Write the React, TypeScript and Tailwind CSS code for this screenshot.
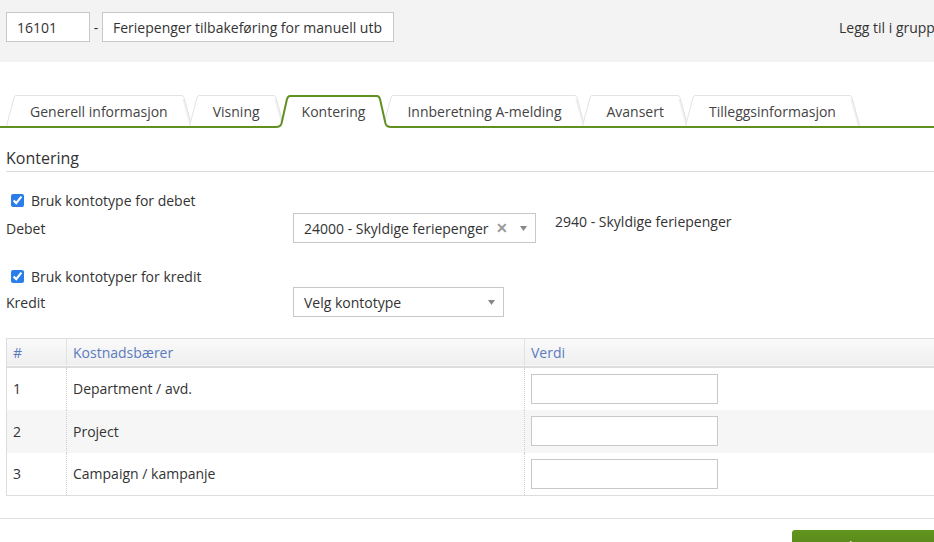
import { FC } from 'react';

const tabs = [
  'Generell informasjon',
  'Visning',
  'Kontering',
  'Innberetning A-melding',
  'Avansert',
  'Tilleggsinformasjon',
];

const rows = [
  { n: '1', name: 'Department / avd.' },
  { n: '2', name: 'Project' },
  { n: '3', name: 'Campaign / kampanje' },
];

const GREEN = '#5f9021';

const InactiveTab: FC<{ label: string; offset: string }> = ({ label, offset }) => (
  <div className={`flex h-[31px] items-stretch ${offset}`}>
    <svg width="10" height="31" viewBox="0 0 10 31" className="block">
      <path d="M0,31 L8,2.5 Q8.8,0.5 10.5,0.5 L10.5,31 Z" fill="#fff" />
      <path d="M0.5,31 L8,2.5 Q8.8,0.5 10,0.5" fill="none" stroke="#e3e3e3" strokeWidth="1" />
    </svg>
    <div className="flex items-center border-t border-[#e3e3e3] bg-white px-[14px] text-[14px] text-[#444] whitespace-nowrap">
      {label}
    </div>
    <svg width="10" height="31" viewBox="0 0 10 31" className="block">
      <path d="M-0.5,0.5 Q1.2,0.5 2,2.5 L10,31 L-0.5,31 Z" fill="#fff" />
      <path d="M1.5,4 L9,31" fill="none" stroke="#d6d6d6" strokeWidth="2.5" opacity="0.35" />
      <path d="M0,0.5 Q1.2,0.5 2,2.5 L9.5,31" fill="none" stroke="#e3e3e3" strokeWidth="1" />
    </svg>
  </div>
);

const ActiveTab: FC<{ label: string }> = ({ label }) => (
  <div className="relative z-10 -mb-[2px] -ml-[8px] flex h-[33px] items-stretch">
    <svg width="14" height="33" viewBox="0 0 14 33" className="block">
      <path d="M0,33 L0,31 Q4,31 5,28 L11,4 Q12,1 14.5,1 L14.5,33 Z" fill="#fff" />
      <path d="M0,32 Q4.5,32 5.5,28.5 L11,4 Q12,1 14.5,1" fill="none" stroke={GREEN} strokeWidth="2" />
    </svg>
    <div className="flex items-center border-t-2 border-[#5f9021] bg-white px-[12px] pb-[2px] text-[14px] text-[#444] whitespace-nowrap">
      {label}
    </div>
    <svg width="14" height="33" viewBox="0 0 14 33" className="block">
      <path d="M14,33 L14,31 Q10,31 9,28 L3,4 Q2,1 -0.5,1 L-0.5,33 Z" fill="#fff" />
      <path d="M14,32 Q9.5,32 8.5,28.5 L3,4 Q2,1 -0.5,1" fill="none" stroke={GREEN} strokeWidth="2" />
    </svg>
  </div>
);

const Caret: FC = () => (
  <svg width="7" height="5" viewBox="0 0 7 5" className="block">
    <path d="M0,0 L7,0 L3.5,5 Z" fill="#888" />
  </svg>
);

export default function App() {
  const activeIndex = tabs.indexOf('Kontering');

  return (
    <div
      className="h-[542px] w-[934px] overflow-hidden bg-white text-[14px] text-[#333]"
      style={{ fontFamily: '"Open Sans", "Noto Sans", sans-serif' }}
    >
      {/* Top bar */}
      <div className="flex h-[62px] items-start bg-[#f3f3f3] pt-[12px] pl-[6px]">
        <div className="flex h-[30px] w-[84px] items-center border border-[#c8c8c8] bg-white px-[10px]">
          16101
        </div>
        <span className="flex h-[30px] w-[12px] items-center justify-center">-</span>
        <div className="flex h-[30px] w-[292px] items-center border border-[#c8c8c8] bg-white px-[10px] whitespace-nowrap">
          Feriepenger tilbakeføring for manuell utb
        </div>
        <div className="ml-auto flex h-[30px] w-[95px] items-center overflow-hidden whitespace-nowrap">
          Legg til i gruppe
        </div>
      </div>

      {/* Tabs */}
      <div className="mt-[33px] flex h-[33px] items-end border-b-2 border-[#5f9021] pl-[6px]">
        {tabs.map((t, i) =>
          i === activeIndex ? (
            <ActiveTab key={t} label={t} />
          ) : (
            <InactiveTab
              key={t}
              label={t}
              offset={i === 0 ? '' : i === activeIndex + 1 ? '-ml-[8px]' : '-ml-[3px]'}
            />
          )
        )}
      </div>
      <div className="h-[2px]" />

      <div className="w-[1000px] pl-[6px]">
        {/* Section title */}
        <div className="mt-[17px] flex h-[25px] items-start border-b border-[#dcdcdc] text-[16px] leading-[22px] text-[#333]">
          Kontering
        </div>

        {/* Debet */}
        <label className="mt-[18px] flex h-[20px] items-center gap-[7px] pl-[5px]">
          <input type="checkbox" defaultChecked className="h-[13px] w-[13px] accent-[#2b7de9]" />
          Bruk kontotype for debet
        </label>
        <div className="mt-[3px] flex items-start">
          <div className="flex h-[30px] w-[287px] items-center">Debet</div>
          <div className="flex h-[30px] w-[243px] items-center border border-[#c8c8c8] bg-white pr-[8px] pl-[10px]">
            <span className="flex-1 whitespace-nowrap">24000 - Skyldige feriepenger</span>
            <span className="mr-[12px] text-[14px] font-bold leading-none text-[#999]">✕</span>
            <Caret />
          </div>
          <div className="-mt-[1px] ml-[19px] leading-[20px]">2940 - Skyldige feriepenger</div>
        </div>

        {/* Kredit */}
        <label className="mt-[23px] flex h-[20px] items-center gap-[7px] pl-[5px]">
          <input type="checkbox" defaultChecked className="h-[13px] w-[13px] accent-[#2b7de9]" />
          Bruk kontotyper for kredit
        </label>
        <div className="mt-[1px] flex items-start">
          <div className="flex h-[30px] w-[287px] items-center">Kredit</div>
          <div className="flex h-[30px] w-[211px] items-center border border-[#c8c8c8] bg-white pr-[8px] pl-[10px]">
            <span className="flex-1 whitespace-nowrap">Velg kontotype</span>
            <Caret />
          </div>
        </div>

        {/* Table */}
        <table className="mt-[21px] w-[994px] border-collapse border border-[#dddddd]">
          <thead>
            <tr className="h-[28px] border-b-2 border-[#dddddd] bg-gradient-to-b from-[#fafafa] to-[#efefef] text-left text-[#5a7bbf]">
              <th className="w-[60px] px-[6px] font-normal">#</th>
              <th className="w-[458px] border-l border-[#e2e2e2] px-[6px] font-normal">Kostnadsbærer</th>
              <th className="border-l border-[#e2e2e2] px-[6px] font-normal">Verdi</th>
            </tr>
          </thead>
          <tbody>
            {rows.map((r, i) => (
              <tr key={r.n} className={`h-[43px] ${i === 1 ? 'bg-[#f6f6f6]' : 'bg-white'}`}>
                <td className="px-[6px]">{r.n}</td>
                <td className="border-l border-dotted border-[#cfcfcf] px-[6px]">{r.name}</td>
                <td className="border-l border-dotted border-[#cfcfcf] px-[6px]">
                  <div className="h-[30px] w-[187px] border border-[#c8c8c8] bg-white" />
                </td>
              </tr>
            ))}
          </tbody>
        </table>
      </div>

      {/* Footer */}
      <div className="mt-[22px] border-t border-[#e3e3e3]" />
      <div className="mt-[11px] ml-[792px] flex h-[40px] w-[150px] justify-center rounded-t-[3px] bg-gradient-to-b from-[#62941f] to-[#4e7c14] pt-[6px] leading-[20px] text-white">
        Lagre
      </div>
    </div>
  );
}
